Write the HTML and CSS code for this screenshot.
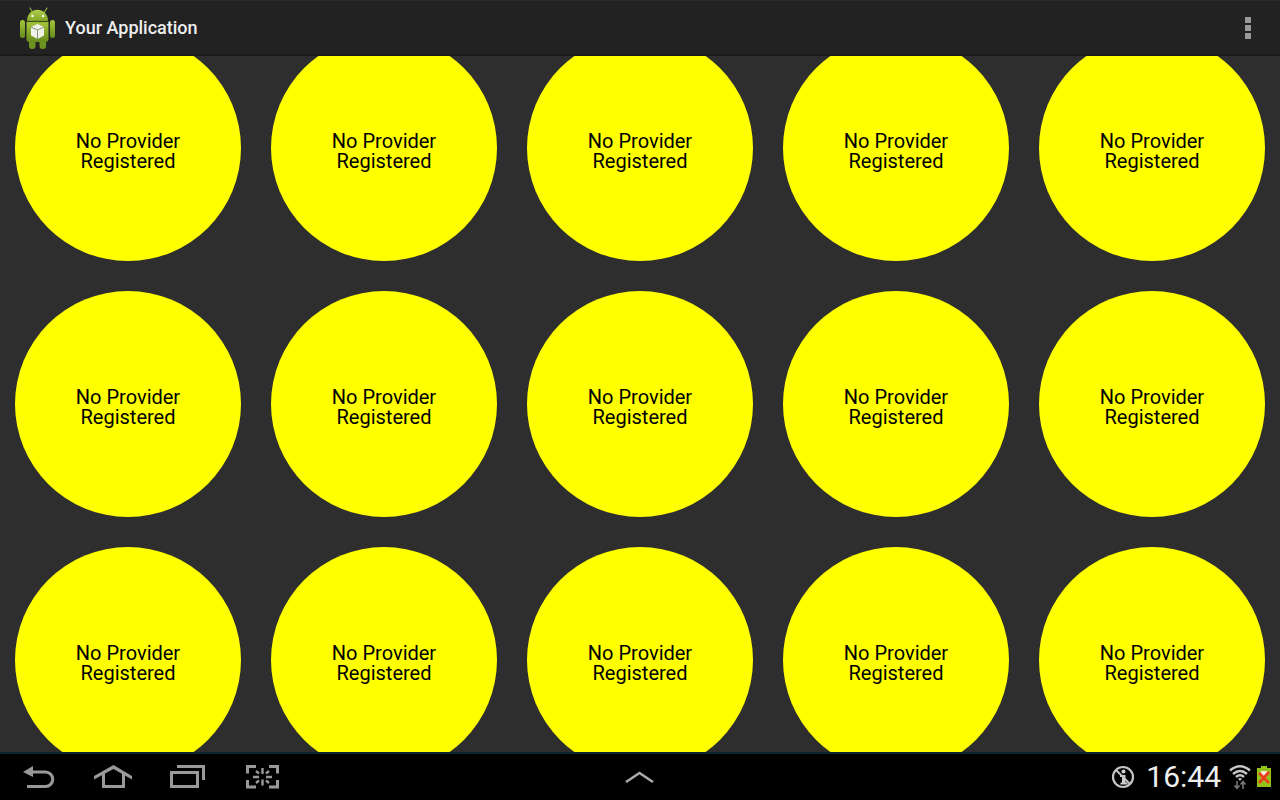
FILE: index.html
```html
<!DOCTYPE html>
<html lang="en">
<head>
<meta charset="utf-8">
<meta name="viewport" content="width=device-width, initial-scale=1">
<title>Your Application</title>
<link rel="stylesheet" href="styles.css">
</head>
<body>
<header class="action-bar">
  <svg class="app-icon" width="38" height="44" viewBox="0 0 38 44" aria-hidden="true">
    <defs>
      <linearGradient id="body" x1="0" y1="0" x2="0" y2="1"><stop offset="0" stop-color="#a5c63b"/><stop offset="1" stop-color="#668c1c"/></linearGradient>
      <linearGradient id="head" x1="0" y1="0" x2="0" y2="1"><stop offset="0" stop-color="#b0d048"/><stop offset="1" stop-color="#83a62b"/></linearGradient>
    </defs>
    <path d="M10 2l3 5M27 2l-3 5" stroke="#87a83a" stroke-width="1.300" stroke-linecap="round"/>
    <rect x="9" y="31" width="6.500" height="12" rx="3" fill="#6c9320"/>
    <rect x="19.500" y="31" width="6.500" height="12" rx="3" fill="#6c9320"/>
    <rect x="0" y="14" width="5" height="18" rx="2.500" fill="url(#body)"/>
    <rect x="30" y="14" width="5" height="18" rx="2.500" fill="url(#body)"/>
    <path d="M7 15C7 0 28 0 28 15z" fill="url(#head)"/>
    <circle cx="12.500" cy="10" r="1.200" fill="#fff"/><circle cx="23" cy="10" r="1.200" fill="#fff"/>
    <path d="M6.500 16h22v17q0 3-3 3h-16q-3 0-3-3z" fill="url(#body)"/>
    <path d="M6.500 15.500h22" stroke="#3c5218" stroke-width="1.200"/>
    <path d="M17.500 18l6.500 3v8.500L17.500 33 11 29.500V21z" fill="#f1f3e9"/>
    <path d="M11 21l6.500 3 6.500-3M17.500 24v9" fill="none" stroke="#8d9580" stroke-width="1"/>
  </svg>
  <h1 class="title">Your Application</h1>
  <button class="icon-button overflow" aria-label="More options">
    <svg width="6" height="22" viewBox="0 0 6 22"><path d="M0 0h6v6H0zM0 8h6v6H0zM0 16h6v6H0z" fill="#999"/></svg>
  </button>
</header>
<main class="grid">
  <button class="provider">No Provider<br>Registered</button>
  <button class="provider">No Provider<br>Registered</button>
  <button class="provider">No Provider<br>Registered</button>
  <button class="provider">No Provider<br>Registered</button>
  <button class="provider">No Provider<br>Registered</button>
  <button class="provider">No Provider<br>Registered</button>
  <button class="provider">No Provider<br>Registered</button>
  <button class="provider">No Provider<br>Registered</button>
  <button class="provider">No Provider<br>Registered</button>
  <button class="provider">No Provider<br>Registered</button>
  <button class="provider">No Provider<br>Registered</button>
  <button class="provider">No Provider<br>Registered</button>
  <button class="provider">No Provider<br>Registered</button>
  <button class="provider">No Provider<br>Registered</button>
  <button class="provider">No Provider<br>Registered</button>
</main>
<footer class="system-bar">
  <nav class="nav">
    <button class="icon-button" aria-label="Back">
      <svg width="40" height="26" viewBox="0 0 40 26"><path d="M12 8h13.500a6.700 6.700 0 0 1 0 14.500H7" fill="none" stroke="#999" stroke-width="3"/><path d="M3 8l10-6v11z" fill="#999"/></svg>
    </button>
    <button class="icon-button" aria-label="Home">
      <svg width="40" height="26" viewBox="0 0 40 26"><path d="M0 15.500V12L19.500 1 38 12v3.500L19.500 5z" fill="#999"/><path d="M9.500 9v13.500h20V9" fill="none" stroke="#999" stroke-width="3"/></svg>
    </button>
    <button class="icon-button" aria-label="Recent apps">
      <svg width="40" height="26" viewBox="0 0 40 26"><path d="M3.500 8.500h26v14h-26z" fill="none" stroke="#999" stroke-width="3"/><path d="M9 2.500h26.500V16" fill="none" stroke="#999" stroke-width="3"/></svg>
    </button>
    <button class="icon-button" aria-label="Capture screen">
      <svg width="40" height="26" viewBox="0 0 40 26"><path d="M5.500 9.500v-7h8.500M27 2.500h8.500v7M35.500 16v7H27M14 23H5.500v-7" fill="none" stroke="#999" stroke-width="3"/><path d="M20.500 4v6M20.500 15.500v6M11 13h6M24 13h6M14 7l3 2.500M27 7l-3 2.500M14 19l3-2.500M27 19l-3-2.500" fill="none" stroke="#999" stroke-width="2.400"/></svg>
    </button>
  </nav>
  <button class="icon-button" aria-label="Open tray">
    <svg width="30" height="12" viewBox="0 0 30 12"><path d="M1 11L14.500 2 28 11" fill="none" stroke="#aaa" stroke-width="2.500"/></svg>
  </button>
  <div class="status">
    <svg width="24" height="24" viewBox="0 0 24 24" aria-hidden="true"><circle cx="12" cy="12" r="10" fill="none" stroke="#c4c4c4" stroke-width="2.200"/><circle cx="12.500" cy="6.500" r="2" fill="#d0d0d0"/><path d="M9 10h5.500v7.500h2v2H9.500v-2H11V12H9z" fill="#d0d0d0"/><path d="M5 5l14 14" stroke="#c4c4c4" stroke-width="2"/></svg>
    <time class="clock">16:44</time>
    <svg class="wifi" width="22" height="26" viewBox="0 0 22 26" aria-hidden="true"><path d="M1 6.500q10-8.500 20 0M4 10q7-6 14 0M7 13q4-3.500 8 0" fill="none" stroke="#c4c4c4" stroke-width="2.500"/><path d="M9 14.800q2-1.500 4 0l-2 2.200z" fill="#c4c4c4"/><path d="M8 17v7M5.500 21.500L8 24.300l2.500-2.800M14 25v-7M11.500 20.500L14 17.500l2.500 3" fill="none" stroke="#777" stroke-width="1.600"/></svg>
    <svg class="battery" width="14" height="22" viewBox="0 0 14 22" aria-hidden="true"><path d="M4 0h6v2h4v19H0V2h4z" fill="#95c11b"/><path d="M4 5h6v6H4z" fill="#f4f0dc"/><path d="M2 7l10 10M12 6L2 17" stroke="#e7401b" stroke-width="2.800"/></svg>
  </div>
</footer>
</body>
</html>
```
FILE: styles.css
```css
* { box-sizing: border-box; }

body {
  margin: 0;
  height: 100vh;
  display: flex;
  flex-direction: column;
  overflow: hidden;
  background: #2e2e2e;
  color: #eee;
  font-family: Roboto, "Liberation Sans", sans-serif;
}

button {
  border: 0;
  padding: 0;
  background: none;
  color: inherit;
  font: inherit;
}

.icon-button { display: flex; }

.action-bar {
  flex: none;
  display: flex;
  align-items: center;
  height: 56px;
  padding: 1px 29px 0 20px;
  background: #222;
  border-top: 1px solid #2c2c2c;
  border-bottom: 2px solid #1a1a1a;
}

.title {
  margin: 0 0 0 7px;
  font-size: 18px;
  line-height: 24px;
  font-weight: 500;
}

.overflow { margin-left: auto; }

.grid {
  flex: 1;
  min-height: 0;
  display: grid;
  grid-template-columns: repeat(5, 1fr);
  align-content: center;
  gap: 30px;
  padding: 0 15px;
  overflow: hidden;
}

.provider {
  aspect-ratio: 1;
  padding-top: 6px;
  border-radius: 50%;
  background: #ff0;
  color: #000;
  font-size: 20px;
  line-height: 20px;
  text-align: center;
}

.system-bar {
  flex: none;
  display: grid;
  grid-template-columns: 1fr auto 1fr;
  align-items: center;
  height: 48px;
  padding: 0 9px;
  background: #000;
  border-top: 2px solid #0b2530;
}

.nav {
  display: flex;
  gap: 34px;
  padding-left: 11px;
}

.status {
  display: flex;
  align-items: center;
  justify-content: flex-end;
}

.clock {
  margin: 0 8px 0 11px;
  font-size: 30px;
  line-height: 40px;
}

.wifi { margin-right: 6px; }
```
